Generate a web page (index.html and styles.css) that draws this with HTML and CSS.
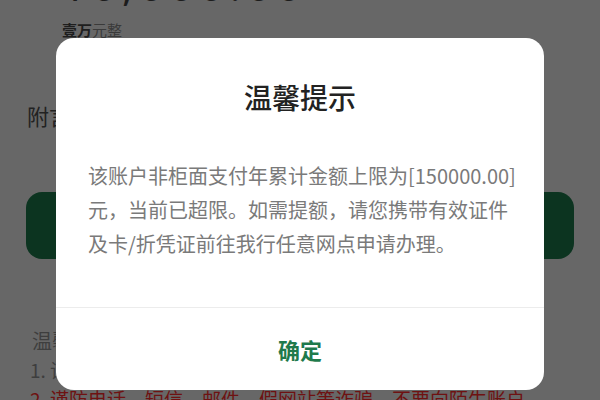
FILE: index.html
```html
<!DOCTYPE html>
<html lang="zh-CN">
<head>
<meta charset="utf-8">
<link rel="stylesheet" href="styles.css">
</head>
<body>
<div class="page">
  <div class="amount">10,000.00</div>
  <div class="words"><b>壹万</b>元整</div>
  <div class="remark">附言</div>
  <div class="btn"></div>
  <div class="tips-title">温馨提示：</div>
  <div class="tip">1. 请核对收款人信息，确认无误后再进行转账。</div>
  <div class="tip red">2. 谨防电话、短信、邮件、假网站等诈骗，不要向陌生账户</div>
</div>
<div class="dialog">
  <div class="d-title">温馨提示</div>
  <div class="d-body">该账户非柜面支付年累计金额上限为[150000.00]<br>元，当前已超限。如需提额，请您携带有效证件<br>及卡/折凭证前往我行任意网点申请办理。</div>
  <div class="d-foot">确定</div>
</div>
</body>
</html>
```
FILE: styles.css
```css
html, body {
  margin: 0;
  height: 100%;
  overflow: hidden;
}
body {
  background: #676767;
  font-family: "Noto Sans CJK SC", "Noto Sans", sans-serif;
  position: relative;
}
.page {
  display: flex;
  flex-direction: column;
}
.amount {
  margin: -40px 0 0 62px;
  font-size: 42px;
  line-height: 50px;
  color: #1c1c1c;
  font-family: "Noto Sans", sans-serif;
  letter-spacing: 6px;
}
.words {
  margin: 8px 0 0 62px;
  font-size: 15px;
  line-height: 24px;
  color: #3a3a3a;
}
.words b {
  color: #1e1e1e;
  font-weight: 700;
}
.remark {
  margin: 58px 0 0 27px;
  font-size: 22px;
  line-height: 30px;
  color: #222;
}
.btn {
  margin: 62px 26px 0 26px;
  height: 67px;
  border-radius: 16px;
  background: #0c3420;
}
.tips-title {
  margin: 69px 0 0 32px;
  font-size: 20px;
  line-height: 26px;
  color: #3e3e3e;
}
.tip {
  margin: 3px 0 0 30px;
  font-size: 19px;
  line-height: 26px;
  color: #3e3e3e;
  white-space: nowrap;
}
.tip.red {
  color: #6e1212;
}
.dialog {
  position: absolute;
  left: 56px;
  top: 38px;
  width: 488px;
  height: 352px;
  background: #fff;
  border-radius: 18px;
  display: flex;
  flex-direction: column;
}
.d-title {
  margin-top: 39px;
  text-align: center;
  font-size: 28px;
  line-height: 40px;
  color: #222;
  font-weight: 500;
}
.d-body {
  margin: 42px 0 0 32px;
  font-size: 20px;
  line-height: 34px;
  color: #7a7a7a;
  white-space: nowrap;
}
.d-foot {
  margin-top: 46px;
  border-top: 1px solid #ececec;
  flex: 1;
  display: flex;
  align-items: center;
  justify-content: center;
  font-size: 22px;
  font-weight: 700;
  color: #1f7a4c;
}
```
